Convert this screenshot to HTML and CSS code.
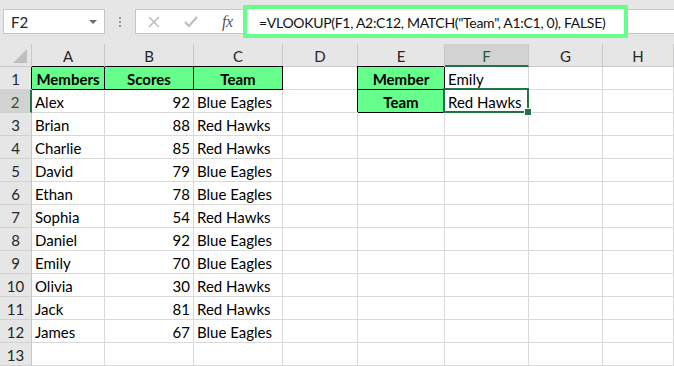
FILE: index.html
```html
<!DOCTYPE html>
<html>
<head>
<meta charset="utf-8">
<link rel="stylesheet" href="styles.css">
</head>
<body>
<div class="app">
  <div class="toolbar">
    <div class="namebox"><span class="ref">F2</span><span class="caret"></span></div>
    <div class="dots"><i></i><i></i><i></i></div>
    <div class="fxbox">
      <svg class="ico" width="12" height="12" viewBox="0 0 12 12"><path d="M1 1 L11 11 M11 1 L1 11" stroke="#bdbdbd" stroke-width="1.6" fill="none"/></svg>
      <svg class="ico" width="14" height="12" viewBox="0 0 14 12"><path d="M1 6 L5 10 L13 1" stroke="#bdbdbd" stroke-width="2.2" fill="none"/></svg>
      <span class="fx">fx</span>
    </div>
    <div class="input"><span class="formula">=VLOOKUP(F1, A2:C12, MATCH("Team", A1:C1, 0), FALSE)</span></div>
  </div>
  <div class="sheet">
    <div class="ch corner"><span class="tri"></span></div>
    <div class="ch">A</div><div class="ch">B</div><div class="ch">C</div><div class="ch">D</div><div class="ch">E</div><div class="ch sel">F</div><div class="ch">G</div><div class="ch">H</div>

    <div class="rh">1</div>
    <div class="c hd first">Members</div><div class="c hd">Scores</div><div class="c hd">Team</div><div class="c"></div>
    <div class="c hd solo">Member</div><div class="c">Emily</div><div class="c"></div><div class="c"></div>

    <div class="rh sel">2</div>
    <div class="c">Alex</div><div class="c n">92</div><div class="c">Blue Eagles</div><div class="c"></div>
    <div class="c hd solo">Team</div><div class="c active">Red Hawks</div><div class="c"></div><div class="c"></div>

    <div class="rh">3</div>
    <div class="c">Brian</div><div class="c n">88</div><div class="c">Red Hawks</div><div class="c"></div><div class="c"></div><div class="c"></div><div class="c"></div><div class="c"></div>

    <div class="rh">4</div>
    <div class="c">Charlie</div><div class="c n">85</div><div class="c">Red Hawks</div><div class="c"></div><div class="c"></div><div class="c"></div><div class="c"></div><div class="c"></div>

    <div class="rh">5</div>
    <div class="c">David</div><div class="c n">79</div><div class="c">Blue Eagles</div><div class="c"></div><div class="c"></div><div class="c"></div><div class="c"></div><div class="c"></div>

    <div class="rh">6</div>
    <div class="c">Ethan</div><div class="c n">78</div><div class="c">Blue Eagles</div><div class="c"></div><div class="c"></div><div class="c"></div><div class="c"></div><div class="c"></div>

    <div class="rh">7</div>
    <div class="c">Sophia</div><div class="c n">54</div><div class="c">Red Hawks</div><div class="c"></div><div class="c"></div><div class="c"></div><div class="c"></div><div class="c"></div>

    <div class="rh">8</div>
    <div class="c">Daniel</div><div class="c n">92</div><div class="c">Blue Eagles</div><div class="c"></div><div class="c"></div><div class="c"></div><div class="c"></div><div class="c"></div>

    <div class="rh">9</div>
    <div class="c">Emily</div><div class="c n">70</div><div class="c">Blue Eagles</div><div class="c"></div><div class="c"></div><div class="c"></div><div class="c"></div><div class="c"></div>

    <div class="rh">10</div>
    <div class="c">Olivia</div><div class="c n">30</div><div class="c">Red Hawks</div><div class="c"></div><div class="c"></div><div class="c"></div><div class="c"></div><div class="c"></div>

    <div class="rh">11</div>
    <div class="c">Jack</div><div class="c n">81</div><div class="c">Red Hawks</div><div class="c"></div><div class="c"></div><div class="c"></div><div class="c"></div><div class="c"></div>

    <div class="rh">12</div>
    <div class="c">James</div><div class="c n">67</div><div class="c">Blue Eagles</div><div class="c"></div><div class="c"></div><div class="c"></div><div class="c"></div><div class="c"></div>

    <div class="rh">13</div>
    <div class="c"></div><div class="c"></div><div class="c"></div><div class="c"></div><div class="c"></div><div class="c"></div><div class="c"></div><div class="c"></div>
  </div>
</div>
</body>
</html>
```

FILE: styles.css
```css
* { box-sizing: border-box; }
html, body { margin: 0; padding: 0; }
body {
  width: 674px;
  height: 366px;
  overflow: hidden;
  background: #e6e6e6;
  font-family: Lato, "Open Sans", "Liberation Sans", sans-serif;
  color: #000;
}
.app { display: flex; flex-direction: column; }

.toolbar {
  height: 44px;
  display: flex;
  align-items: flex-start;
  padding: 9px 0 0 3px;
  background: #e6e6e6;
}
.namebox {
  width: 102px;
  height: 25px;
  background: #fff;
  border: 1px solid #c6c6c6;
  display: flex;
  align-items: center;
  justify-content: space-between;
  padding: 1px 7px 0 7px;
  font-size: 15px;
  color: #222;
}
.caret {
  width: 0; height: 0;
  border-left: 4px solid transparent;
  border-right: 4px solid transparent;
  border-top: 4px solid #6b6b6b;
}
.dots {
  width: 30px;
  height: 25px;
  display: flex;
  flex-direction: column;
  align-items: center;
  justify-content: center;
  gap: 2px;
}
.dots i { width: 2px; height: 2px; background: #9a9a9a; display: block; }
.fxbox {
  width: 109px;
  height: 25px;
  background: #fff;
  border: 1px solid #c6c6c6;
  border-right: none;
  display: flex;
  align-items: center;
  padding-left: 12px;
  gap: 24px;
}
.fxbox .ico { display: block; }
.fx {
  font-family: "Liberation Serif", serif;
  font-style: italic;
  font-size: 16px;
  color: #555;
  letter-spacing: -0.5px;
}
.input {
  flex: 1;
  height: 25px;
  background: #fff;
  border-top: 1px solid #c6c6c6;
  border-bottom: 1px solid #c6c6c6;
  display: flex;
}
.formula {
  width: 385px;
  height: 33px;
  margin: -5px 0 0 -1px;
  border: 4px solid #66ff8c;
  padding: 1px 0 0 12px;
  display: flex;
  align-items: center;
  font-size: 14px;
  letter-spacing: -0.3px;
  color: #111;
  white-space: nowrap;
  background: #fff;
}

.sheet {
  display: grid;
  grid-template-columns: 32px 73px 89px 89px 75px 87px 84px 74px 71px;
  grid-auto-rows: 23px;
  background: #fff;
  font-size: 15px;
}
.ch {
  background: #e6e6e6;
  border-right: 1px solid #c8c8c8;
  border-bottom: 1px solid #c8c8c8;
  display: flex;
  align-items: center;
  justify-content: center;
  padding-top: 2px;
  color: #262626;
  font-size: 15px;
}
.ch.sel {
  background: #d2d2d2;
  border-bottom: 2px solid #217346;
  color: #1e5a3a;
}
.corner { position: relative; }
.tri {
  position: absolute;
  right: 4px;
  bottom: 3px;
  width: 0; height: 0;
  border-left: 14px solid transparent;
  border-bottom: 14px solid #bfbfbf;
}
.rh {
  background: #e6e6e6;
  border-right: 1px solid #c8c8c8;
  border-bottom: 1px solid #d0d0d0;
  display: flex;
  align-items: center;
  justify-content: center;
  padding-top: 2px;
  color: #262626;
}
.rh.sel {
  background: #d2d2d2;
  border-right: 2px solid #217346;
  color: #1e5a3a;
}
.c {
  border-right: 1px solid #d9d9d9;
  border-bottom: 1px solid #d9d9d9;
  display: flex;
  align-items: center;
  padding: 2px 3px 0 3px;
  white-space: nowrap;
}
.c.n { justify-content: flex-end; }
.c.hd {
  background: #66ff8c;
  font-weight: bold;
  justify-content: center;
  border-right: 1px solid #000;
  border-bottom: 1px solid #000;
  box-shadow: 0 -1px 0 #000;
}
.c.hd.first, .c.hd.solo { box-shadow: -1px -1px 0 #000; }
.c.active { position: relative; }
.c.active::before {
  content: "";
  position: absolute;
  left: -2px; top: -2px; right: -1px; bottom: -1px;
  border: 2px solid #217346;
}
.c.active::after {
  content: "";
  position: absolute;
  right: -4px; bottom: -4px;
  width: 6px; height: 6px;
  background: #217346;
  border: 1px solid #fff;
}
```
